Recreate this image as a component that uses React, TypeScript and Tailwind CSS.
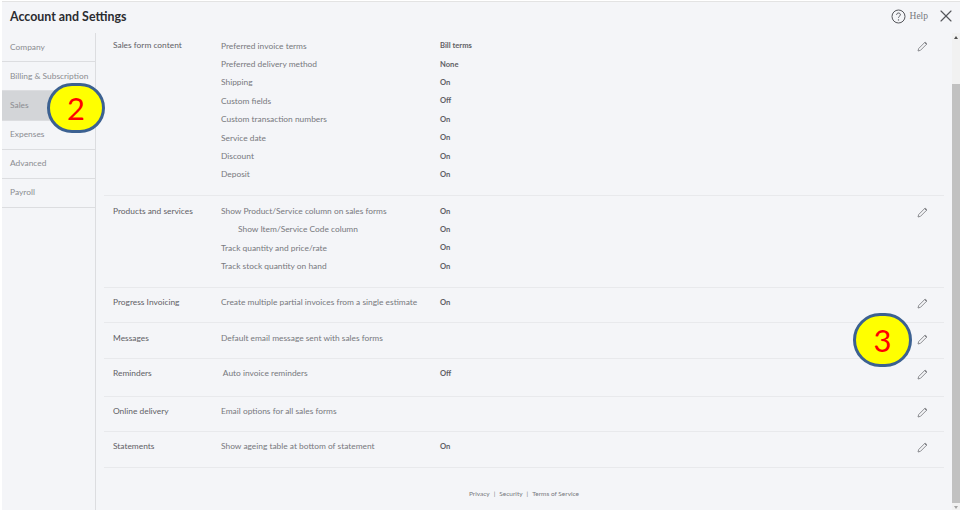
import { X } from 'lucide-react';

const navItems = ['Company', 'Billing & Subscription', 'Sales', 'Expenses', 'Advanced', 'Payroll'];

type Row = { label: string; value?: string; indent?: boolean };
type Section = { title: string; height: string; pad: string; rows: Row[] };

const sections: Section[] = [
  {
    title: 'Sales form content',
    height: 'h-[163px]',
    pad: 'pt-[3.2px]',
    rows: [
      { label: 'Preferred invoice terms', value: 'Bill terms' },
      { label: 'Preferred delivery method', value: 'None' },
      { label: 'Shipping', value: 'On' },
      { label: 'Custom fields', value: 'Off' },
      { label: 'Custom transaction numbers', value: 'On' },
      { label: 'Service date', value: 'On' },
      { label: 'Discount', value: 'On' },
      { label: 'Deposit', value: 'On' },
    ],
  },
  {
    title: 'Products and services',
    height: 'h-[92px]',
    pad: 'pt-[5.5px]',
    rows: [
      { label: 'Show Product/Service column on sales forms', value: 'On' },
      { label: 'Show Item/Service Code column', value: 'On', indent: true },
      { label: 'Track quantity and price/rate', value: 'On' },
      { label: 'Track stock quantity on hand', value: 'On' },
    ],
  },
  {
    title: 'Progress Invoicing',
    height: 'h-[35px]',
    pad: 'pt-[5px]',
    rows: [{ label: 'Create multiple partial invoices from a single estimate', value: 'On' }],
  },
  {
    title: 'Messages',
    height: 'h-[36px]',
    pad: 'pt-[6px]',
    rows: [{ label: 'Default email message sent with sales forms' }],
  },
  {
    title: 'Reminders',
    height: 'h-[38px]',
    pad: 'pt-[5px]',
    rows: [{ label: '\u00a0Auto invoice reminders', value: 'Off' }],
  },
  {
    title: 'Online delivery',
    height: 'h-[35px]',
    pad: 'pt-[5px]',
    rows: [{ label: 'Email options for all sales forms' }],
  },
  {
    title: 'Statements',
    height: 'h-[36px]',
    pad: 'pt-[5px]',
    rows: [{ label: 'Show ageing table at bottom of statement', value: 'On' }],
  },
];

function PencilIcon() {
  return (
    <svg width="11" height="11" viewBox="0 0 11 11" fill="none" className="text-[#808186]">
      <path
        d="M7.6 1.6 9.4 3.4 3.5 9.3 1 10l.7-2.5z"
        stroke="currentColor"
        strokeWidth="0.9"
        strokeLinejoin="round"
      />
      <path d="M8.2 1 10 2.8 9.4 3.4 7.6 1.6z" fill="currentColor" stroke="currentColor" strokeWidth="0.6" />
    </svg>
  );
}

function Callout({ n, className }: { n: string; className: string }) {
  return (
    <div
      className={`absolute flex items-center justify-center rounded-full border-[3px] border-[#3c6191] bg-[#ffff00] font-['Lato',sans-serif] text-[31px] text-[#ff0000] ${className}`}
    >
      {n}
    </div>
  );
}

export default function App() {
  return (
    <div className="relative h-[510px] w-[963px] overflow-hidden bg-white font-['Lato',sans-serif] text-[8.4px] text-[#77787d]">
      <div className="ml-[2px] mr-[3px] mt-[1px] flex h-full flex-col border-t border-[#e3e3e3] bg-[#f4f5f8]">
        <header className="flex h-[31px] shrink-0 items-center pl-[8px] pr-[4px]">
          <h1 className="pb-[1px] text-[12.4px] font-bold text-[#2b2c30]">Account and Settings</h1>
          <div className="ml-auto flex items-center pb-[3px]">
            <svg width="15" height="15" viewBox="0 0 15 15" fill="none" className="text-[#55565b]">
              <circle cx="7.5" cy="7.5" r="6.5" stroke="currentColor" strokeWidth="1" />
              <path
                d="M5.6 5.8c0-1.1.9-1.8 1.9-1.8s1.9.7 1.9 1.7c0 1.5-1.9 1.5-1.9 3"
                stroke="currentColor"
                strokeWidth="1"
              />
              <circle cx="7.5" cy="10.9" r="0.7" fill="currentColor" />
            </svg>
            <span className="ml-[4px] font-['Liberation_Serif',serif] text-[9.5px] text-[#77787d]">Help</span>
            <X size={20} strokeWidth={1.4} className="ml-[8px] text-[#55565b]" />
          </div>
        </header>

        <div className="flex min-h-0 flex-1">
          <nav className="w-[94px] shrink-0 border-r border-[#dcdde0]">
            {navItems.map((item) => (
              <div
                key={item}
                className={`flex h-[29.2px] items-center border-b border-[#dcdde0] pb-[0.5px] pl-[8px] text-[#8b8c91] ${
                  item === 'Sales' ? 'bg-[#d3d5d8]' : ''
                }`}
              >
                {item}
              </div>
            ))}
          </nav>

          <main className="flex min-w-0 flex-1 flex-col pl-[8px]">
            <div className="w-[840px]">
              {sections.map((section) => (
                <section
                  key={section.title}
                  className={`flex border-b border-[#e8e9ec] ${section.height} ${section.pad}`}
                >
                  <div className="h-[18.4px] w-[117px] shrink-0 pl-[9px] leading-[18.4px] text-[#5f6065]">
                    {section.title}
                  </div>
                  <div className="flex-1">
                    {section.rows.map((row) => (
                      <div key={row.label} className="flex h-[18.4px] items-center pt-[1px]">
                        <span className={`w-[219px] shrink-0 ${row.indent ? 'pl-[17px]' : ''}`}>{row.label}</span>
                        {row.value && <span className="text-[7.6px] font-bold text-[#5f6065]">{row.value}</span>}
                      </div>
                    ))}
                  </div>
                  <div className="w-[27px] shrink-0 pt-[5px]">
                    <PencilIcon />
                  </div>
                </section>
              ))}
            </div>
            <footer className="flex w-[840px] justify-center gap-[4px] pt-[21px] text-[6.5px] text-[#77787d]">
              <span>Privacy</span>
              <span>|</span>
              <span>Security</span>
              <span>|</span>
              <span>Terms of Service</span>
            </footer>
          </main>

          <div className="flex w-[8px] shrink-0 flex-col bg-[#f1f1f1]">
            <div className="flex h-[9px] items-center justify-center">
              <div className="h-0 w-0 border-x-[2px] border-b-[3px] border-x-transparent border-b-[#505050]" />
            </div>
            <div className="mt-[42px] flex-1 bg-[#c1c1c1]" />
            <div className="flex h-[8px] items-center justify-center">
              <div className="h-0 w-0 border-x-[2px] border-t-[3px] border-x-transparent border-t-[#a3a3a3]" />
            </div>
          </div>
        </div>
      </div>

      <Callout n="2" className="left-[47px] top-[83px] h-[50px] w-[58px]" />
      <Callout n="3" className="left-[853px] top-[313px] h-[54px] w-[59px]" />
    </div>
  );
}
